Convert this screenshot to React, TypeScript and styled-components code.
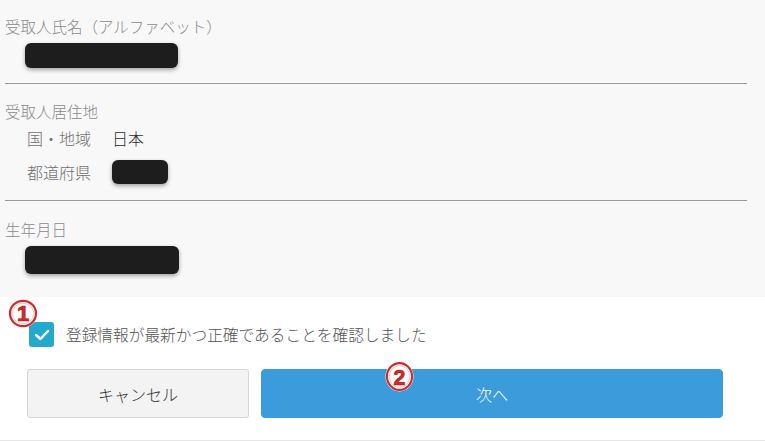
import styled, { createGlobalStyle } from 'styled-components';

const GlobalStyle = createGlobalStyle`
  html, body {
    margin: 0;
    padding: 0;
    background: #ffffff;
    font-family: "Noto Sans CJK JP", "Noto Sans", sans-serif;
    font-weight: 300;
  }
`;

// red circled step number laid over the form (annotation)
function Marker({ num, w, h }: { num: string; w: number; h: number }) {
  return (
    <svg width={w} height={h} viewBox="0 0 30 30" preserveAspectRatio="none">
      <circle cx="15" cy="15" r="14.5" fill="#ffffff" />
      <circle cx="15" cy="15" r="13" fill="#ffffff" stroke="#cf2a2a" strokeWidth="2.2" />
      <circle cx="15" cy="15" r="10.6" fill="none" stroke="#f0b8b8" strokeWidth="0.8" />
      <text
        x="15"
        y="22.8"
        textAnchor="middle"
        fontSize="22"
        fontWeight="700"
        fontFamily="'Liberation Sans', Arial, sans-serif"
        fill="#d42a2a"
        stroke="#a81818"
        strokeWidth="0.7"
      >
        {num}
      </text>
    </svg>
  );
}

function App() {
  return (
    <>
      <GlobalStyle />
      <Page>
        <Panel>
          <Section $top={16} $bottom={15}>
            <Label>受取人氏名（アルファベット）</Label>
            <Redacted $width={153} $height={25} $left={20} />
          </Section>
          <Section $top={17} $bottom={16}>
            <Label>受取人居住地</Label>
            <SubList>
              <SubRow>
                <SubLabel>国・地域</SubLabel>
                <SubValue>日本</SubValue>
              </SubRow>
              <SubRow>
                <SubLabel>都道府県</SubLabel>
                <Redacted $width={56} $height={24} />
              </SubRow>
            </SubList>
          </Section>
          <Section $top={18} $bottom={23} $last>
            <Label>生年月日</Label>
            <Redacted $width={154} $height={28} $left={20} />
          </Section>
        </Panel>

        <Confirm>
          <MarkerSpot $x={8} $y={2}>
            <Marker num="1" w={30} h={29} />
          </MarkerSpot>
          <CheckRow>
            <CheckBox>
              <svg width="16" height="12" viewBox="0 0 16 12">
                <path d="M2 6 L6.5 10 L14 2" fill="none" stroke="#ffffff" strokeWidth="2.4" strokeLinecap="round" strokeLinejoin="round" />
              </svg>
            </CheckBox>
            <CheckText>登録情報が最新かつ正確であることを確認しました</CheckText>
          </CheckRow>
          <Buttons>
            <MarkerSpot $x={358} $y={-8}>
              <Marker num="2" w={29} h={31} />
            </MarkerSpot>
            <Button $primary={false} $width={222}>キャンセル</Button>
            <Button $primary $width={462}>次へ</Button>
          </Buttons>
        </Confirm>
      </Page>
    </>
  );
}

const Page = styled.div`
  width: 765px;
  height: 441px;
  display: flex;
  flex-direction: column;
  overflow: hidden;
`;

const Panel = styled.div`
  background: #f8f8f8;
  padding: 0 18px 0 5px;
  display: flex;
  flex-direction: column;
`;

const Section = styled.div<{ $top: number; $bottom: number; $last?: boolean }>`
  padding: ${(p) => p.$top}px 0 ${(p) => p.$bottom}px;
  border-bottom: ${(p) => (p.$last ? 'none' : '1px solid #9a9a9a')};
  display: flex;
  flex-direction: column;
  align-items: flex-start;
  gap: 7px;
`;

const Label = styled.div`
  font-size: 15.5px;
  line-height: 20px;
  height: 20px;
  color: #8a8a8a;
  white-space: nowrap;
`;

const Redacted = styled.div<{ $width: number; $height: number; $left?: number }>`
  width: ${(p) => p.$width}px;
  height: ${(p) => p.$height}px;
  margin-left: ${(p) => p.$left || 0}px;
  background: #1d1d1d;
  border-radius: 6px;
  box-shadow: 0 2px 4px rgba(0, 0, 0, 0.35);
`;

const SubList = styled.div`
  display: flex;
  flex-direction: column;
  gap: 12px;
  padding-left: 22px;
`;

const SubRow = styled.div`
  display: flex;
  align-items: center;
  min-height: 20px;
`;

const SubLabel = styled.div`
  width: 85px;
  font-size: 16px;
  line-height: 20px;
  color: #707070;
`;

const SubValue = styled.div`
  font-size: 16px;
  line-height: 20px;
  color: #2a2a2a;
`;

const Confirm = styled.div`
  position: relative;
  background: #ffffff;
  border-bottom: 1px solid #e6e6e6;
  box-sizing: border-box;
  height: 145px;
  padding: 25px 0 0 27px;
  display: flex;
  flex-direction: column;
`;

const MarkerSpot = styled.div<{ $x: number; $y: number }>`
  position: absolute;
  left: ${(p) => p.$x}px;
  top: ${(p) => p.$y}px;
  display: flex;
  z-index: 2;
`;

const CheckRow = styled.div`
  display: flex;
  align-items: center;
  gap: 12px;
  padding-left: 2px;
`;

const CheckBox = styled.div`
  width: 25px;
  height: 25px;
  border-radius: 3px;
  background: #22a9cc;
  display: flex;
  align-items: center;
  justify-content: center;
`;

const CheckText = styled.div`
  font-size: 15.7px;
  line-height: 25px;
  color: #555555;
  white-space: nowrap;
`;

const Buttons = styled.div`
  position: relative;
  display: flex;
  gap: 12px;
  margin-top: 22px;
`;

const Button = styled.div<{ $primary: boolean; $width: number }>`
  width: ${(p) => p.$width}px;
  height: 49px;
  box-sizing: border-box;
  display: flex;
  align-items: center;
  justify-content: center;
  font-size: 16px;
  border-radius: ${(p) => (p.$primary ? '4px' : '3px')};
  background: ${(p) => (p.$primary ? '#3c9bdb' : '#f3f3f3')};
  border: 1px solid ${(p) => (p.$primary ? '#3c9bdb' : '#d6d6d6')};
  color: ${(p) => (p.$primary ? '#ffffff' : '#333333')};
`;

export default App;
